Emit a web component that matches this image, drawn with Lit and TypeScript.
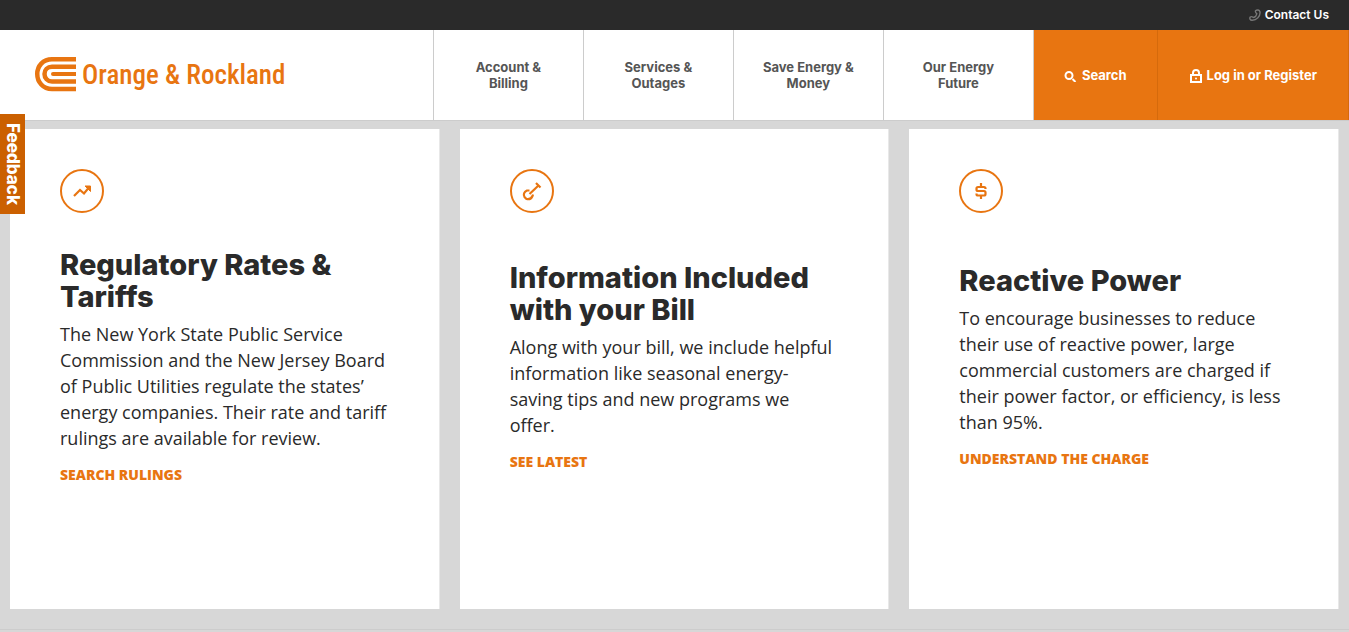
import { LitElement, html, css, svg, type TemplateResult } from "lit";
import { customElement, property } from "lit/decorators.js";

interface CardData {
  icon: "trend" | "shovel" | "dollar";
  title: string;
  text: string;
  link: string;
}

const NAV = ["Account & Billing", "Services & Outages", "Save Energy & Money", "Our Energy Future"];

const CARDS: CardData[] = [
  {
    icon: "trend",
    title: "Regulatory Rates & Tariffs",
    text: "The New York State Public Service Commission and the New Jersey Board of Public Utilities regulate the states’ energy companies. Their rate and tariff rulings are available for review.",
    link: "Search Rulings",
  },
  {
    icon: "shovel",
    title: "Information Included with your Bill",
    text: "Along with your bill, we include helpful information like seasonal energy-saving tips and new programs we offer.",
    link: "See Latest",
  },
  {
    icon: "dollar",
    title: "Reactive Power",
    text: "To encourage businesses to reduce their use of reactive power, large commercial customers are charged if their power factor, or efficiency, is less than 95%.",
    link: "Understand the Charge",
  },
];

const ICONS: Record<CardData["icon"], TemplateResult> = {
  trend: svg`
    <path d="M14 27 L20 21 L24 24.500 L28.500 19" />
    <path d="M25 17 H30.500 V22.500 Z" fill="#e87511" stroke-width="1" />`,
  shovel: svg`
    <path d="M19.500 25 L28.500 16.500" />
    <path d="M26 14 L30.500 18.500" />
    <path d="M19.500 21.500 L17 21.500 C14 23 13 25.500 14.500 28 L16.500 30 C19 30.500 21.500 29.500 22.500 27 L23 25.500" />`,
  dollar: svg`
    <path d="M26.500 20 V19.500 Q26.500 18 25 18 H19 Q17.500 18 17.500 19.500 V20.500 Q17.500 22 19 22 H25 Q26.500 22 26.500 23.500 V25 Q26.500 26.500 25 26.500 H19 Q17.500 26.500 17.500 25 V24.500" />
    <path d="M22 14 V18 M22 26.500 V30" />`,
};

@customElement("info-card")
class InfoCard extends LitElement {
  @property({ attribute: false }) data!: CardData;

  static styles = css`
    :host {
      display: block;
    }
    .card {
      box-sizing: border-box;
      display: grid;
      grid-template-rows: 1fr auto 1fr;
      height: 100%;
      min-height: 480px;
      padding: 40px 51px 40px 50px;
      border-right: 1px solid #e8e8e8;
      background: #fff;
    }
    .icon {
      display: block;
      width: 44px;
      height: 44px;
      fill: none;
      stroke: #e87511;
      stroke-width: 2;
    }
    .glyph {
      stroke-width: 2.2;
    }
    .title {
      margin: 0 0 8px;
      color: #2a2a2a;
      font: 800 29px/32px Inter, sans-serif;
    }
    .text {
      margin: 0 0 12px;
      color: #2a2a2a;
      font: 400 18px/26px "Open Sans", sans-serif;
    }
    .link {
      display: block;
      padding-bottom: 2px;
      color: #e87511;
      font: 800 14px/24px "Open Sans", sans-serif;
      text-decoration: none;
      text-transform: uppercase;
    }
  `;

  render() {
    const { icon, title, text, link } = this.data;
    return html`
      <article class="card">
        <svg class="icon" viewBox="0 0 44 44" aria-hidden="true">
          <circle cx="22" cy="22" r="21" />
          <g class="glyph">${ICONS[icon]}</g>
        </svg>
        <div>
          <h2 class="title">${title}</h2>
          <p class="text">${text}</p>
          <a class="link" href="#">${link}</a>
        </div>
      </article>
    `;
  }
}

@customElement("app-root")
class AppRoot extends LitElement {
  static styles = css`
    :host {
      display: block;
      min-height: 100vh;
      background: #d7d7d7;
      font-family: Inter, sans-serif;
    }
    a {
      text-decoration: none;
    }
    .topbar {
      display: flex;
      justify-content: flex-end;
      align-items: center;
      height: 30px;
      padding: 0 20px;
      background: #2a2a2a;
    }
    .contact {
      display: flex;
      align-items: center;
      gap: 4px;
      color: #fff;
      font: 600 12px/16px Inter, sans-serif;
    }
    .header {
      display: flex;
      justify-content: space-between;
      height: 90px;
      background: #fff;
      border-bottom: 1px solid #ccc;
    }
    .brand {
      display: flex;
      align-items: center;
      gap: 6px;
      padding-left: 35px;
      color: #e87511;
      font: 500 27px/32px "Roboto Condensed", Roboto, sans-serif;
      white-space: nowrap;
    }
    .menu {
      display: flex;
    }
    .item {
      box-sizing: border-box;
      display: flex;
      align-items: center;
      justify-content: center;
      width: 150px;
      padding: 0 25px;
      border-left: 1px solid #ccc;
      color: #555;
      font: 700 13px/16px Inter, sans-serif;
      text-align: center;
    }
    .action {
      display: flex;
      align-items: center;
      gap: 5px;
      padding: 0 30px;
      border: 0;
      border-right: 1px solid #d56a0c;
      background: #e87511;
      color: #fff;
      font: 700 13px/16px Inter, sans-serif;
    }
    .search {
      border-left: 1px solid #ccc;
    }
    .login {
      padding: 0 31px 0 32px;
    }
    .cards {
      display: grid;
      grid-template-columns: repeat(3, 1fr);
      gap: 20px;
      padding: 8px 10px 20px;
      border-bottom: 1px solid #ccc;
    }
    .feedback {
      position: fixed;
      left: 0;
      top: 114px;
      width: 25px;
      height: 100px;
      padding: 0;
      border: 0;
      background: #cb6000;
      color: #fff;
      font: 800 17px/25px Inter, sans-serif;
      writing-mode: vertical-rl;
    }
  `;

  render() {
    return html`
      <div class="topbar">
        <a class="contact" href="#">
          <svg width="12" height="12" viewBox="0 0 12 12" fill="none" stroke="#777" stroke-width="1.4" aria-hidden="true">
            <path d="M6.500 1.800 C8 .5 10.500 .7 11 3 C11.500 7.500 7.500 11.300 3 11.200 C1 11.200 .3 9.300 1.300 8 C2.500 7 3.800 8 4.700 8.500 C6.300 7.800 7.500 6.300 7.800 4.800 C7 4 6 2.800 6.500 1.800 Z" />
          </svg>
          Contact Us
        </a>
      </div>
      <header class="header">
        <a class="brand" href="#">
          <svg width="41" height="36" viewBox="0 0 41 36" fill="none" stroke="#e87511" aria-hidden="true">
            <path stroke-width="4.500" d="M41 2.250 H17 C8 2.250 2.250 9 2.250 17 C2.250 25 8 32 17 32 H41" />
            <path stroke-width="4.500" d="M41 9.700 H17 C12.500 9.700 9.500 13 9.500 17 C9.500 21 12.500 24.600 17 24.600 H41" />
            <path stroke-width="4" d="M41 17 H18" />
            <circle cx="18" cy="17" r="2" fill="#e87511" stroke="none" />
          </svg>
          Orange &amp; Rockland
        </a>
        <nav class="menu">
          ${NAV.map((label) => html`<a class="item" href="#">${label}</a>`)}
          <button class="action search" type="button">
            <svg width="13" height="13" viewBox="0 0 13 13" fill="none" stroke="#fff" stroke-width="2" aria-hidden="true">
              <circle cx="5" cy="6.500" r="3.500" />
              <path d="M8.500 10 L11.500 13" />
            </svg>
            Search
          </button>
          <a class="action login" href="#">
            <svg width="12" height="15" viewBox="0 0 12 15" fill="none" stroke="#fff" aria-hidden="true">
              <path stroke-width="2" d="M3 7 V5 C3 1 9 1 9 5 V7" />
              <rect x="1" y="7" width="10" height="7" stroke-width="2" />
              <circle cx="6" cy="10.500" r="1" fill="#fff" stroke="none" />
            </svg>
            Log in or Register
          </a>
        </nav>
      </header>
      <main class="cards">
        ${CARDS.map((card) => html`<info-card .data=${card}></info-card>`)}
      </main>
      <button class="feedback" type="button">Feedback</button>
    `;
  }
}
